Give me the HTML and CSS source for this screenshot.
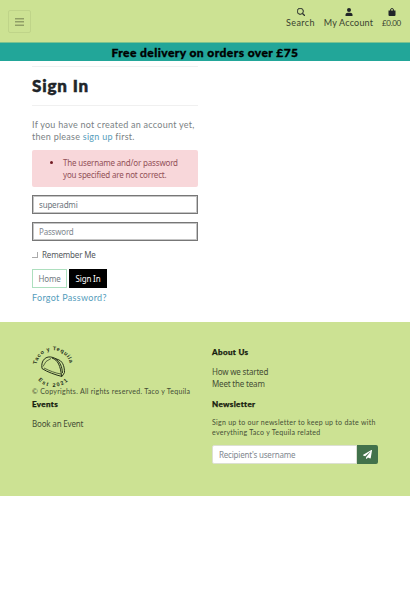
FILE: index.html
```html
<!DOCTYPE html>
<html lang="en">
<head>
<meta charset="utf-8">
<title>Taco y Tequila</title>
<link rel="stylesheet" href="styles.css">
</head>
<body>
<header class="topbar">
  <button class="toggler" aria-label="Menu"><svg width="9" height="8" viewBox="0 0 9 8"><path d="M0 .5h9M0 3.500h9M0 7.500h9" stroke="#8f9f66"/><path d="M0 4.500h9M0 6.500h9M0 1.500h9" stroke="#b0c17e"/></svg></button>
  <nav class="links">
    <a class="link search"><svg width="8" height="8" viewBox="0 0 16 16"><path d="M11.742 10.344a6.5 6.5 0 1 0-1.397 1.398l3.85 3.85a1 1 0 0 0 1.415-1.414zM12 6.5a5.5 5.5 0 1 1-11 0 5.500 5.500 0 0 1 11 0z" stroke="#212529" stroke-width=".8"/></svg><span>Search</span></a>
    <a class="link account"><svg width="8" height="8" viewBox="0 0 14 16"><circle cx="7" cy="4" r="4"/><path d="M0 16v-2.500C0 11 2 9.500 4.500 9.500h5C12 9.500 14 11 14 13.500V16z"/></svg><span>My Account</span></a>
    <a class="link bag"><svg width="8" height="8" viewBox="0 0 16 16"><path d="M1 5h14v9a2 2 0 0 1-2 2H3a2 2 0 0 1-2-2z"/><path d="M5 7V4a3 3 0 0 1 6 0v3" fill="none" stroke="#212529" stroke-width="1.8"/></svg><span>£0.00</span></a>
  </nav>
</header>
<div class="banner"><span>Free delivery on orders over £75</span></div>
<main class="signin">
  <hr>
  <h1><span>Sign In</span></h1>
  <hr>
  <p class="intro"><span>If you have not created an account yet,</span><br><span>then please <a>sign up</a> first.</span></p>
  <ul class="alert"><li><span>The username and/or password</span><br><span>you specified are not correct.</span></li></ul>
  <form>
    <input class="field" type="text" value="superadmi">
    <input class="field" type="password" placeholder="Password">
    <label class="remember"><i class="box"></i><span>Remember Me</span></label>
    <div class="buttons"><a class="btn home">Home</a><a class="btn submit">Sign In</a></div>
    <a class="forgot">Forgot Password?</a>
  </form>
</main>
<footer class="footer">
  <section class="brand">
    <svg class="logo" width="42" height="42" viewBox="0 0 42 42">
      <defs><path id="top" d="M4.500 18.500A17 17 0 0 1 38 18.500"/><path id="bottom" d="M6 34A21 21 0 0 0 37.500 33.500"/></defs>
      <text><textPath href="#top" textLength="46">Taco y Tequila</textPath></text>
      <text><textPath href="#bottom" textLength="33">Est 2021</textPath></text>
      <g fill="none" stroke="#25301a" stroke-linejoin="round">
        <path d="M10 22.500C8.500 14.500 14 9 21 11.500l6 2.500c4.500 2 5.500 8 5.500 12.500l-2.500 4C24 29 15 26 10 22.500z" stroke-width="1"/>
        <path d="M11 20.500l3-5 5-3M12 22c6 3 11 5 17 6" stroke-width=".7"/>
        <path d="M20 12c6 2 8.500 8 9.500 18M23.500 13c5 3 6.500 8 7 14" stroke-width="1"/>
      </g>
    </svg>
    <p class="copy"><span>© Copyrights. All rights reserved. Taco y Tequila</span></p>
  </section>
  <section class="about">
    <h2>About Us</h2>
    <a>How we started</a>
    <a>Meet the team</a>
  </section>
  <section class="events">
    <h2>Events</h2>
    <a>Book an Event</a>
  </section>
  <section class="news">
    <h2>Newsletter</h2>
    <p><span>Sign up to our newsletter to keep up to date with</span><br><span>everything Taco y Tequila related</span></p>
    <div class="subscribe"><input type="text" placeholder="Recipient's username"><button aria-label="Subscribe"><svg width="9" height="9" viewBox="0 0 512 512"><path fill="#fff" d="M476 3.200L12.500 270.600c-18.100 10.400-15.800 35.600 2.200 43.200L121 358.400l287.300-253.200c5.500-4.900 13.300 2.600 8.600 8.300L176 407v80.500c0 23.600 28.500 32.900 42.500 15.800L282 426l124.600 52.200c14.200 6 30.400-2.900 33-18.200l72-432C515 7.800 493.300-6.800 476 3.200z"/></svg></button></div>
  </section>
</footer>
</body>
</html>
```
FILE: styles.css
```css
* { box-sizing: border-box; }
body { margin: 0; background: #fff; color: #212529; font: 8px/12px "Noto Sans", "Open Sans", sans-serif; letter-spacing: -.18px; }
h1, h2, p, ul { margin: 0; }
span { white-space: nowrap; }
hr { margin: 0; border: 0; border-top: 1px solid #f0f0f0; }
.topbar { height: 43px; display: flex; justify-content: space-between; align-items: flex-start; padding: 0 9px 0 8px; background: #cce293; border-bottom: 1px solid #7cc38f; }
.toggler { width: 23px; height: 23px; margin-top: 10px; padding: 0; display: flex; align-items: center; justify-content: center; background: none; border: 1px solid #bfd489; border-radius: 2px; }
.links { display: flex; gap: 9px; padding-top: 8px; font-family: Lato, sans-serif; font-size: 9px; }
.link { display: flex; flex-direction: column; align-items: center; color: #39412f; }
.link svg { fill: #212529; }
.link span { line-height: 12px; margin-top: 1px; }
.search { width: 29px; }
.account { width: 49px; }
.bag { width: 19px; }
.search span { letter-spacing: .42px; }
.account span { letter-spacing: .2px; }
.bag span { font-size: 8px; letter-spacing: -.3px; }
.banner { height: 18px; background: #22a699; color: #000; text-align: center; font: 900 12px/20px Lato, sans-serif; letter-spacing: .43px; -webkit-text-stroke: .35px #000; }
.signin { width: 166px; margin-left: 32px; padding-top: 5px; height: 261px; }
h1 { height: 38px; font: 900 17px/38px Lato, sans-serif; letter-spacing: .85px; -webkit-text-stroke: .5px #212529; }
.intro { margin-top: 13px; margin-bottom: 7px; color: #7a7f84; font: 9px/12px Lato, sans-serif; letter-spacing: .26px; }
.intro a, .forgot { color: #559dbb; }
.alert { height: 37px; padding: 7px 6px 6px 31px; background: #f8d7da; border-radius: 2px; color: #925057; }
.alert li::marker { color: #721c24; }
form { margin-top: 8px; }
.field { display: block; width: 166px; height: 19px; margin: 0 0 8px; padding: 0 6px; border: 1px solid #777; outline: 1px solid rgb(110 110 110 / .4); outline-offset: -2px; color: #6c757d; background: #fff; font: 8px "Noto Sans", sans-serif; letter-spacing: -.2px; }
::placeholder { color: #7f888f; opacity: 1; }
.remember { display: flex; align-items: center; height: 12px; gap: 4px; color: #54585c; }
.box { width: 6px; height: 6px; border-right: 1px solid #aaa; border-bottom: 1px solid #aaa; }
.buttons { display: flex; gap: 2px; margin-top: 8px; }
.btn { height: 19px; padding-top: 1px; display: flex; align-items: center; justify-content: center; }
.home { width: 35px; border: 1px solid #addfbe; color: #717a80; }
.submit { width: 38px; background: #000; color: #fff; }
.forgot { display: block; margin-top: 4px; font: 9px/12px Lato, sans-serif; letter-spacing: .3px; }
.footer { height: 174px; padding: 24px 32px 0; display: grid; grid-template-columns: 166px 166px; grid-template-rows: 52px 1fr; column-gap: 14px; background: #cce293; color: #454e35; }
.logo { display: block; }
.logo text { font: bold 5.500px "Liberation Sans", sans-serif; fill: #25301a; letter-spacing: 0; }
.copy { font: 7px/6px Lato, sans-serif; letter-spacing: .27px; }
.footer h2 { margin-bottom: 8px; font: 900 8px/12px Lato, sans-serif; letter-spacing: .36px; color: #17200f; -webkit-text-stroke: .25px #17200f; }
.footer section > a { display: block; }
.news p { font: 7px/10px Lato, sans-serif; margin-top: -1px; letter-spacing: .27px; }
.subscribe { display: flex; margin-top: 8px; height: 19px; }
.subscribe input { width: 145px; min-width: 0; height: 19px; padding: 0 6px; border: 1px solid #dce0d2; border-radius: 2px 0 0 2px; font: 8px "Noto Sans", sans-serif; letter-spacing: -.2px; }
.subscribe button { width: 21px; padding: 0; border: 0; border-radius: 0 2px 2px 0; background: #42724b; display: flex; align-items: center; justify-content: center; }
```
